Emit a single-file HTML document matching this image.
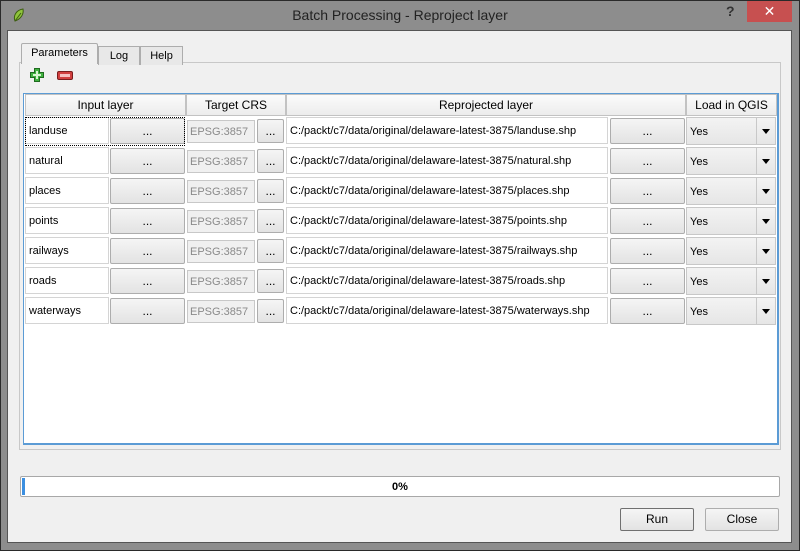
<!DOCTYPE html>
<html><head><style>
*{margin:0;padding:0;box-sizing:border-box}
body{width:800px;height:551px;background:#8d8d8d;font-family:"Liberation Sans",sans-serif;font-size:12px;color:#000;position:relative;overflow:hidden}
.a{position:absolute}
#frame{left:0;top:0;width:800px;height:551px;border:1px solid #2a2a2a;background:#8d8d8d}
#title{left:0;top:7px;width:800px;text-align:center;font-size:14px;color:#222}
#client{left:7px;top:30px;width:785px;height:513px;background:#f0f0f0;border:1px solid #555}
.tab{background:#f0f0f0;border:1px solid #adadad;border-bottom:none;height:19px;text-align:center;font-size:11px;line-height:18px}
#pane{left:19px;top:62px;width:762px;height:388px;border:1px solid #c8c8c8;background:#f0f0f0}
#table{left:23px;top:93px;width:756px;height:352px;background:#fff;border:1px solid #5b9bd5;border-width:1px 2px 2px 1px}
.hd{top:94px;height:22px;background:linear-gradient(#fbfbfb,#ececec);border:1px solid #c2c2c2;text-align:center;line-height:21px;font-size:12px}
.cell{background:#fff;border:1px solid #d4d4d4;height:27px;line-height:27px;padding-left:3px;font-size:11px}
.btn{background:linear-gradient(#f5f5f5,#e3e3e3);border:1px solid #adadad;border-radius:2px;height:26px;text-align:center;line-height:24px;font-size:12px}
.epsg{background:#f0f0f0;border:1px solid #c8c8c8;height:23px;line-height:22px;padding-left:2px;color:#8a8a8a;font-size:11px}
.combo{background:linear-gradient(#f3f3f3,#e6e6e6);border:1px solid #c8c8c8;height:28px;line-height:28px;padding-left:3px;font-size:11px}
.arr{position:absolute;right:0;top:0;width:19px;height:26px;border-left:1px solid #c8c8c8}
.arr:after{content:"";position:absolute;left:5px;top:11px;border:4px solid transparent;border-top:5px solid #000}
</style></head><body>
<div class="a" id="frame"></div>
<div class="a" style="left:12px;top:8px;width:14px;height:15px">
<svg width="14" height="15" viewBox="0 0 14 15"><path d="M3 13 C1 8 4 2 11 1 C12 6 9 11 3 13Z" fill="#8fc43c" stroke="#3d5d10" stroke-width="1"/><path d="M3 13 L9 5" stroke="#3d5d10" stroke-width="1"/></svg></div>
<div class="a" id="title">Batch Processing - Reproject layer</div>
<div class="a" style="left:726px;top:3px;font-size:14px;font-weight:bold;color:#333">?</div>
<div class="a" style="left:747px;top:1px;width:45px;height:21px;background:#c75050;color:#fff;text-align:center;font-size:14px;line-height:21px">✕</div>
<div class="a" id="client"></div>
<div class="a" id="pane"></div>
<div class="a tab" style="left:21px;top:43px;width:77px;height:21px;border-radius:2px 2px 0 0;z-index:2">Parameters</div>
<div class="a tab" style="left:98px;top:46px;width:42px;background:#e8e8e8">Log</div>
<div class="a tab" style="left:140px;top:46px;width:43px;background:#e8e8e8">Help</div>
<div class="a" style="left:29px;top:67px"><svg width="16" height="16"><path d="M5.5 1.5h5v4h4v5h-4v4h-5v-4h-4v-5h4z" fill="#3fb13f" stroke="#1e6b1e"/><path d="M7 4h2v3h3v2H9v3H7V9H4V7h3z" fill="#d8f5d0"/></svg></div>
<div class="a" style="left:57px;top:71px;width:16px;height:9px;background:#d24040;border:1px solid #7a1d1d;border-radius:2px"><div style="margin:2px 2px;height:3px;background:#f6c0c0"></div></div>
<div class="a" id="table"></div>
<div class="a hd" style="left:25px;width:161px">Input layer</div>
<div class="a hd" style="left:186px;width:100px">Target CRS</div>
<div class="a hd" style="left:286px;width:400px">Reprojected layer</div>
<div class="a hd" style="left:686px;width:91px">Load in QGIS</div>
<div id="rows"></div>
<script>
var n=["landuse","natural","places","points","railways","roads","waterways"],h="";
n.forEach(function(s,i){var y=117+i*30;
h+='<div class="a cell" style="left:25px;top:'+y+'px;width:84px">'+s+'</div>';
h+='<div class="a btn" style="left:110px;top:'+(y+1)+'px;width:75px">...</div>';
h+='<div class="a epsg" style="left:187px;top:'+(y+3)+'px;width:68px">EPSG:3857</div>';
h+='<div class="a btn" style="left:257px;top:'+(y+2)+'px;width:27px;height:24px;line-height:22px">...</div>';
h+='<div class="a cell" style="left:286px;top:'+y+'px;width:322px">C:/packt/c7/data/original/delaware-latest-3875/'+s+'.shp</div>';
h+='<div class="a btn" style="left:610px;top:'+(y+1)+'px;width:75px">...</div>';
h+='<div class="a combo" style="left:686px;top:'+y+'px;width:90px">Yes<div class="arr"></div></div>';
});
h+='<div class="a" style="left:25px;top:117px;width:160px;height:29px;border:1px dotted #000"></div>';
document.getElementById("rows").innerHTML=h;
</script>
<div class="a" style="left:20px;top:476px;width:760px;height:21px;background:#fff;border:1px solid #a8a8a8;border-radius:2px;text-align:center;line-height:20px;font-weight:bold;font-size:11px">0%</div>
<div class="a" style="left:22px;top:478px;width:3px;height:17px;background:#3c8fe0"></div>
<div class="a btn" style="left:620px;top:508px;width:74px;height:23px;border-color:#707070;line-height:21px">Run</div>
<div class="a btn" style="left:705px;top:508px;width:74px;height:23px;line-height:21px">Close</div>
</body></html>
